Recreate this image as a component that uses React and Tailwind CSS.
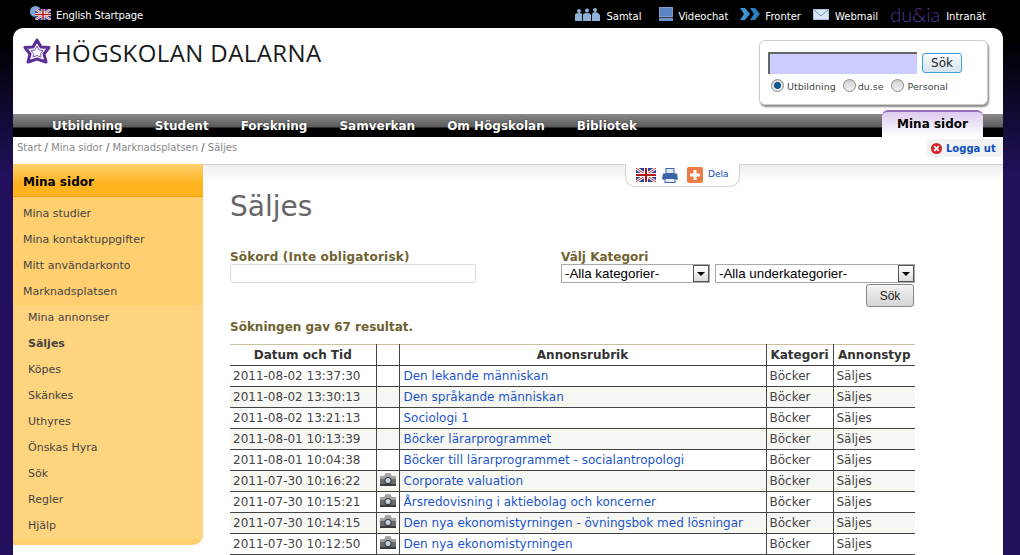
import React from "react";

const sideItems = ["Mina studier", "Mina kontaktuppgifter", "Mitt användarkonto", "Marknadsplatsen"];
const subItems = ["Mina annonser", "Säljes", "Köpes", "Skänkes", "Uthyres", "Önskas Hyra", "Sök", "Regler", "Hjälp"];
const navItems = ["Utbildning", "Student", "Forskning", "Samverkan", "Om Högskolan", "Bibliotek"];

const rows = [
  ["2011-08-02 13:37:30", false, "Den lekande människan"],
  ["2011-08-02 13:30:13", false, "Den språkande människan"],
  ["2011-08-02 13:21:13", false, "Sociologi 1"],
  ["2011-08-01 10:13:39", false, "Böcker lärarprogrammet"],
  ["2011-08-01 10:04:38", false, "Böcker till lärarprogrammet - socialantropologi"],
  ["2011-07-30 10:16:22", true, "Corporate valuation"],
  ["2011-07-30 10:15:21", true, "Årsredovisning i aktiebolag och koncerner"],
  ["2011-07-30 10:14:15", true, "Den nya ekonomistyrningen - övningsbok med lösningar"],
  ["2011-07-30 10:12:50", true, "Den nya ekonomistyrningen"],
];

function UkFlag({ className }) {
  return (
    <svg viewBox="0 0 20 14" className={className}>
      <rect width="20" height="14" fill="#2b3f94" />
      <path d="M0 0L20 14M20 0L0 14" stroke="#fff" strokeWidth="3" />
      <path d="M0 0L20 14M20 0L0 14" stroke="#c22" strokeWidth="1" />
      <path d="M10 0V14M0 7H20" stroke="#fff" strokeWidth="4" />
      <path d="M10 0V14M0 7H20" stroke="#b01818" strokeWidth="2" />
    </svg>
  );
}

function Camera() {
  return (
    <svg viewBox="0 0 16 14" className="w-[16px] h-[14px] -mt-[2px]">
      <path d="M1 3h3.5l1-2.5h5l1 2.5H15q1 0 1 1v8q0 1-1 1H1q-1 0-1-1V4q0-1 1-1z" fill="#6a6a6a" />
      <path d="M1 3h3.5l1-2.5h5l1 2.5H15q1 0 1 1v2H0V4q0-1 1-1z" fill="#a4a4a4" />
      <rect x="0" y="11" width="16" height="2" fill="#3c3c3c" />
      <circle cx="8" cy="7.5" r="3.6" fill="#3a3a3a" />
      <circle cx="8" cy="7.5" r="2.5" fill="#c2d6e8" />
    </svg>
  );
}

function Radio({ checked }) {
  return (
    <span className="w-[13px] h-[13px] rounded-full border border-[#8a8a8a] bg-gradient-to-b from-[#d0d0d0] to-[#f4f4f4] flex items-center justify-center shrink-0 -mt-[4px]">
      {checked && <span className="w-[7px] h-[7px] rounded-full bg-[#0d5f9c] border border-[#063a66]" />}
    </span>
  );
}

function FakeSelect({ label, width }) {
  return (
    <div className={`${width} h-[19px] border border-[#a9a9a9] bg-white flex items-center justify-between text-[13.33px] text-black font-['Liberation_Sans',sans-serif]`}>
      <span className="pl-[3px]">{label}</span>
      <span className="w-[16px] h-[17px] border border-[#555] bg-gradient-to-b from-[#fff] to-[#ddd] flex items-center justify-center">
        <svg viewBox="0 0 8 4" className="w-[8px] h-[4px]"><path d="M0 0H8L4 4z" fill="#000" /></svg>
      </span>
    </div>
  );
}

function TopLink({ icon, label, gap = "gap-[5px]" }) {
  return (
    <div className={`flex items-center ${gap}`}>
      {icon}
      <span className="pt-[5px]">{label}</span>
    </div>
  );
}

export default function App() {
  return (
    <div className="relative h-[555px] overflow-hidden bg-[linear-gradient(#000_40px,#22105c_175px)] font-['DejaVu_Sans',sans-serif] text-[#444]">
      {/* Top links */}
      <div className="h-[28px] flex items-center justify-between pl-[30px] pr-[34px] text-[10px] text-white">
        <div className="flex items-center gap-[5px]">
          <div className="relative w-[21px] h-[16px]">
            <span className="absolute left-0 top-0 w-[11px] h-[11px] rounded-full bg-[#7ea6dc]" />
            <UkFlag className="absolute left-[5px] top-[3px] w-[16px] h-[11px]" />
          </div>
          <span className="pt-[3px] tracking-[-0.1px]">English Startpage</span>
        </div>
        <div className="flex items-center gap-[12px]">
          <TopLink
            label="Samtal"
            icon={
              <svg viewBox="0 0 27 14" className="w-[27px] h-[14px]">
                <g fill="#8fb0d8">
                  <circle cx="5" cy="4" r="2" />
                  <circle cx="13" cy="3.5" r="2" />
                  <circle cx="21" cy="3" r="2" />
                  <path d="M1 14V8q0-2 4-2t3 2v6zM9 14V8q0-2 4-2t4 2v6zM18 14V8q0-3 3-3t5 3v6z" />
                </g>
              </svg>
            }
          />
          <TopLink
            gap="gap-[5px] ml-[6px]"
            label="Videochat"
            icon={
              <svg viewBox="0 0 14 14" className="w-[14px] h-[14px]">
                <rect x="0.5" y="0" width="13" height="10" fill="#5b86c6" stroke="#c6d6ee" strokeWidth="0.6" />
                <rect x="0" y="11" width="14" height="3" fill="#6f93c8" />
              </svg>
            }
          />
          <TopLink
            label="Fronter"
            icon={
              <svg viewBox="0 0 20 12" className="w-[20px] h-[12px]">
                <path d="M0 0H5L10 6L5 12H0L4 6z" fill="#3d94cc" />
                <path d="M10 0H15L20 6L15 12H10L14 6z" fill="#2a7fc0" />
              </svg>
            }
          />
          <TopLink
            gap="gap-[6px]"
            label="Webmail"
            icon={
              <svg viewBox="0 0 16 11" className="w-[16px] h-[11px]">
                <rect width="16" height="11" fill="#dbe6f7" stroke="#7da2d6" />
                <path d="M1 1L8 7L15 1" fill="none" stroke="#6d94cc" />
              </svg>
            }
          />
          <div className="flex items-center gap-[6px]">
            <span className="text-[20px] leading-[20px] font-['Lato',sans-serif] font-light text-[#57359a] w-[50px]">du&amp;ia</span>
            <span className="pt-[5px]">Intranät</span>
          </div>
        </div>
      </div>

      <div className="relative mx-[13px] w-[990px] bg-white rounded-t-[10px]">
        {/* Logo and search */}
        <div className="h-[86px] flex justify-between pl-[10px] pr-[15px]">
          <div className="flex items-start gap-[3px] pt-[10px]">
            <svg viewBox="0 0 28 26" className="w-[28px] h-[26px]">
              <path d="M14 2L18 9L26 9.5L21 16L23 24L14 21L5 24L7 16L2 9.5L10 9z" fill="none" stroke="#5a2e96" strokeWidth="3" strokeLinejoin="round" />
              <path d="M14 8L16 12L20 12.5L17.5 15.5L18 19L14 17.5L10 19L10.5 15.5L8 12.5L12 12z" fill="#fff" stroke="#7a56b0" strokeWidth="1" />
            </svg>
            <span className="text-[24px] leading-[26px] pt-[2px] text-[#1a1a1a] font-['Open_Sans',sans-serif] tracking-[0.4px] whitespace-nowrap">HÖGSKOLAN DALARNA</span>
          </div>
          <div className="mt-[12px] w-[229px] h-[65px] border border-[#ccc] rounded-[6px] bg-white shadow-[1px_2px_2px_#888] pl-[8px] pt-[11px]">
            <div className="flex items-center gap-[5px]">
              <input className="w-[149px] h-[22px] bg-[#ccccff] border-t-2 border-l-2 border-[#666] outline-none" />
              <button className="w-[40px] h-[20px] text-[12px] text-[#222] leading-none rounded-[3px] border border-[#3fa0d0] bg-gradient-to-b from-[#f6fbff] to-[#d6e4ee]">Sök</button>
            </div>
            <div className="flex items-center mt-[6px] pl-[3px] text-[9.5px] text-[#444]">
              <Radio checked />
              <span className="ml-[3px] mr-[7px]">Utbildning</span>
              <Radio />
              <span className="ml-[2px] mr-[7px]">du.se</span>
              <Radio />
              <span className="ml-[4px]">Personal</span>
            </div>
          </div>
        </div>

        {/* Main nav */}
        <div className="h-[23px] bg-[linear-gradient(#8a8a8a_0px,#5a5a5a_13px,#000_14px)] flex items-center gap-[32px] pl-[39px] pt-[1px] text-[12px] font-bold text-white [text-shadow:0_0_1px_#000]">
          {navItems.map((n) => (
            <span key={n} className="whitespace-nowrap">{n}</span>
          ))}
        </div>
        <div className="absolute left-[869px] top-[82px] w-[101px] h-[27px] pb-[1px] rounded-t-[6px] border-t-2 border-[#9b6fc0] bg-gradient-to-b from-[#dccbef] to-white flex items-center justify-center text-[12px] font-bold text-black">
          Mina sidor
        </div>

        {/* Breadcrumb */}
        <div className="h-[27px] pl-[4px] pt-[5px] text-[10px] leading-[12px] text-[#555]">
          <span className="text-[#888]">Start</span> / <span className="text-[#888]">Mina sidor</span> / <span className="text-[#888]">Marknadsplatsen</span> / <span className="text-[#888]">Säljes</span>
        </div>
        <div className="absolute right-0 top-[111px] w-[76px] h-[18px] rounded-l-[4px] bg-[#f2f2f2] flex items-center pl-[4px] gap-[4px] text-[10px] font-bold text-[#0b50c0]">
          <svg viewBox="0 0 12 12" className="w-[11px] h-[11px]">
            <circle cx="6" cy="6" r="6" fill="#d8202a" />
            <path d="M3.5 3.5L8.5 8.5M8.5 3.5L3.5 8.5" stroke="#fff" strokeWidth="2" />
          </svg>
          Logga ut
        </div>

        <div className="flex h-[391px]">
          {/* Sidebar */}
          <aside className="w-[190px] shrink-0 h-[381px] bg-[#ffcf70] rounded-br-[10px] overflow-hidden text-[11px] text-[#444]">
            <div className="h-[33px] bg-[linear-gradient(#ffcf6e_0%,#ffb41f_60%)] border-b border-[#f0a400] flex items-center pl-[10px] pt-[3px] text-[12px] font-bold text-black">
              Mina sidor
            </div>
            <div className="pt-[4px]">
              {sideItems.map((s) => (
                <div key={s} className="h-[26px] flex items-center pl-[10px]">{s}</div>
              ))}
            </div>
            <div className="bg-[#ffd47f] h-[234px] pl-[15px]">
              {subItems.map((s) => (
                <div key={s} className={`h-[26px] flex items-center ${s === "Säljes" ? "font-bold" : ""}`}>{s}</div>
              ))}
            </div>
          </aside>

          {/* Main content */}
          <main className="relative flex-1 pl-[27px] pr-[88px] border-t border-[#d0d0d0] bg-[linear-gradient(#eeeeee_0px,#fff_16px)]">
            <div className="absolute left-[422px] -top-px w-[115px] h-[23px] bg-white border border-t-0 border-[#d4d4d4] rounded-b-[10px] flex items-center pl-[10px] text-[9px] text-[#0b50c0]">
              <UkFlag className="w-[20px] h-[14px]" />
              <svg viewBox="0 0 16 14" className="w-[16px] h-[15px] ml-[6px]">
                <rect x="4" y="0" width="8" height="5" fill="#dfe8f5" stroke="#3b64a8" />
                <path d="M1 5H15L16 11H0z" fill="#3b64a8" />
                <rect x="3" y="10" width="10" height="4" fill="#e8eef8" stroke="#3b64a8" />
              </svg>
              <span className="w-[16px] h-[16px] ml-[9px] rounded-[2px] bg-[#ee7a45] flex items-center justify-center">
                <svg viewBox="0 0 10 10" className="w-[10px] h-[10px]"><path d="M5 0V10M0 5H10" stroke="#fff" strokeWidth="3" /></svg>
              </span>
              <span className="ml-[5px]">Dela</span>
            </div>

            <h1 className="pt-[25px] text-[28px] leading-[34px] text-[#666]">Säljes</h1>

            <div className="flex mt-[25px]">
              <div className="w-[331px]">
                <div className="h-[15px] text-[12px] leading-[17px] tracking-[0.2px] font-bold text-[#6f6230] text-nowrap">Sökord (Inte obligatorisk)</div>
                <input className="block w-[246px] h-[19px] border border-[#ddd] rounded-[2px] outline-none" />
              </div>
              <div>
                <div className="h-[15px] text-[12px] leading-[17px] font-bold text-[#6f6230]">Välj Kategori</div>
                <div className="flex gap-[5px]">
                  <FakeSelect label="-Alla kategorier-" width="w-[149px]" />
                  <FakeSelect label="-Alla underkategorier-" width="w-[200px]" />
                </div>
                <div className="flex justify-end pr-[1px] mt-px">
                  <button className="w-[48px] h-[23px] border border-[#888] rounded-[3px] bg-gradient-to-b from-[#f4f4f4] to-[#d4d4d4] text-[12px] text-[#222] font-['Liberation_Sans',sans-serif]">Sök</button>
                </div>
              </div>
            </div>

            <div className="mt-[12px] text-[12px] leading-[16px] font-bold text-[#6f6230]">Sökningen gav 67 resultat.</div>

            <table className="mt-[9px] w-[685px] table-fixed border-collapse text-[12px] text-[#444]">
              <colgroup>
                <col className="w-[146px]" />
                <col className="w-[23px]" />
                <col className="w-[367px]" />
                <col className="w-[67px]" />
                <col className="w-[82px]" />
              </colgroup>
              <thead>
                <tr className="h-[21px] border-t border-t-[#c8c09a] border-b border-b-[#444] text-[#333]">
                  <th className="font-bold">Datum och Tid</th>
                  <th className="border-l border-[#444]"></th>
                  <th className="border-l border-[#444] font-bold">Annonsrubrik</th>
                  <th className="border-l border-[#444] font-bold">Kategori</th>
                  <th className="border-l border-[#444] font-bold">Annonstyp</th>
                </tr>
              </thead>
              <tbody>
                {rows.map(([date, hasPhoto, title], i) => (
                  <tr key={date} className={`h-[21px] border-b border-[#444] ${i % 2 === 1 ? "bg-[#f6f6f2]" : "bg-white"}`}>
                    <td className="pl-[3px] p-0">{date}</td>
                    <td className="border-l border-[#444] p-0">
                      {hasPhoto && <div className="flex justify-center"><Camera /></div>}
                    </td>
                    <td className="border-l border-[#444] pl-[4px] p-0 text-[#1d55c9] whitespace-nowrap">{title}</td>
                    <td className="border-l border-[#444] pl-[3px] p-0">Böcker</td>
                    <td className="border-l border-[#444] pl-[3px] p-0">Säljes</td>
                  </tr>
                ))}
              </tbody>
            </table>
          </main>
        </div>
      </div>
    </div>
  );
}
